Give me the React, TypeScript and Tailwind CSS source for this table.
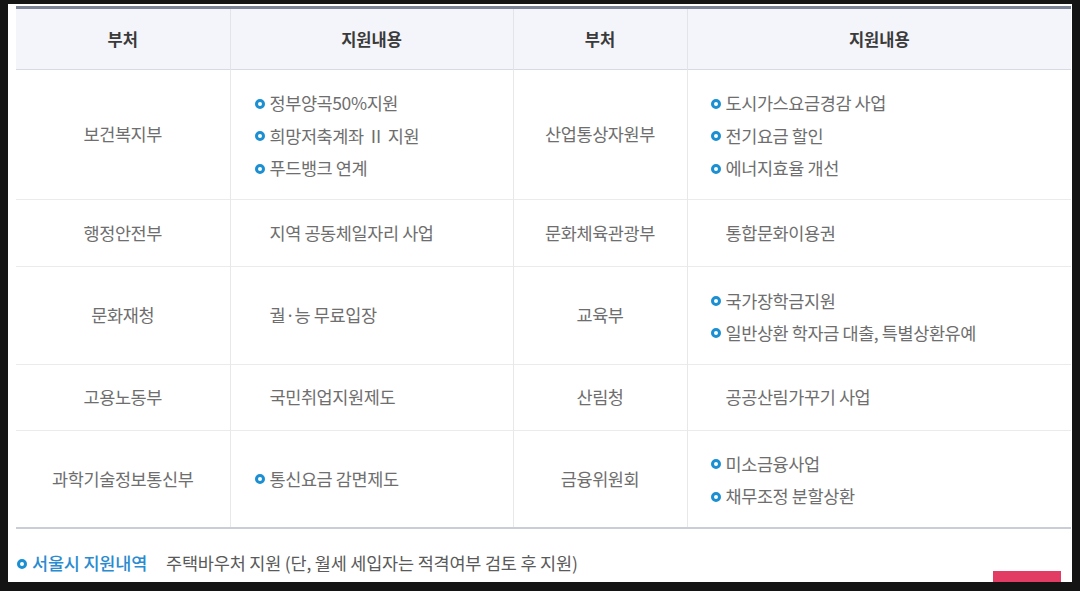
import React from "react";

type Row = {
  deptA: string;
  itemsA: string[];
  bulletA: boolean;
  deptB: string;
  itemsB: string[];
  bulletB: boolean;
  height: string;
};

const rows: Row[] = [
  {
    deptA: "보건복지부",
    itemsA: ["정부양곡50%지원", "희망저축계좌 Ⅱ 지원", "푸드뱅크 연계"],
    bulletA: true,
    deptB: "산업통상자원부",
    itemsB: ["도시가스요금경감 사업", "전기요금 할인", "에너지효율 개선"],
    bulletB: true,
    height: "h-[130px]",
  },
  {
    deptA: "행정안전부",
    itemsA: ["지역 공동체일자리 사업"],
    bulletA: false,
    deptB: "문화체육관광부",
    itemsB: ["통합문화이용권"],
    bulletB: false,
    height: "h-[67px]",
  },
  {
    deptA: "문화재청",
    itemsA: ["궐·능 무료입장"],
    bulletA: false,
    deptB: "교육부",
    itemsB: ["국가장학금지원", "일반상환 학자금 대출, 특별상환유예"],
    bulletB: true,
    height: "h-[98px]",
  },
  {
    deptA: "고용노동부",
    itemsA: ["국민취업지원제도"],
    bulletA: false,
    deptB: "산림청",
    itemsB: ["공공산림가꾸기 사업"],
    bulletB: false,
    height: "h-[66px]",
  },
  {
    deptA: "과학기술정보통신부",
    itemsA: ["통신요금 감면제도"],
    bulletA: true,
    deptB: "금융위원회",
    itemsB: ["미소금융사업", "채무조정 분할상환"],
    bulletB: true,
    height: "h-[97px]",
  },
];

function Bullet() {
  return (
    <span className="inline-block w-[10px] h-[10px] rounded-full border-[3px] border-[#1b8fd2] shrink-0" />
  );
}

function Items({ items, bullet }: { items: string[]; bullet: boolean }) {
  return (
    <ul className={`flex flex-col ${items.length > 1 ? "pt-[3px]" : ""}`}>
      {items.map((item) => (
        <li key={item} className="flex items-center gap-[5px] h-[32.5px]">
          {bullet ? <Bullet /> : <span className="w-[10px] shrink-0" />}
          <span>{item}</span>
        </li>
      ))}
    </ul>
  );
}

export default function App() {
  return (
    <div
      className="w-[1080px] h-[591px] bg-[#141414] pt-1 pl-2 overflow-hidden"
      style={{ fontFamily: '"Noto Sans CJK KR", "Noto Sans", sans-serif' }}
    >
      <div className="w-[1064px] h-[578px] bg-white overflow-hidden pt-[2px] flex flex-col">
        <table className="ml-2 w-[1055px] table-fixed border-collapse text-[17.5px] text-[#6e6e6e] tracking-[-0.4px]">
          <colgroup>
            <col className="w-[214px]" />
            <col className="w-[283px]" />
            <col className="w-[174px]" />
            <col className="w-[384px]" />
          </colgroup>
          <thead>
            <tr className="h-[62px] bg-[#f4f5fa] border-t-[3px] border-t-[#7a8396] border-b border-b-[#d7dae2]">
              {["부처", "지원내용", "부처", "지원내용"].map((h, i) => (
                <th
                  key={i}
                  className={`font-bold text-[16.5px] tracking-normal text-[#3a3a3a] text-center ${
                    i < 3 ? "border-r border-r-[#e2e4ea]" : ""
                  }`}
                >
                  {h}
                </th>
              ))}
            </tr>
          </thead>
          <tbody>
            {rows.map((r, idx) => (
              <tr
                key={r.deptA}
                className={`${r.height} ${
                  idx === rows.length - 1
                    ? "border-b-2 border-b-[#c8cdd8]"
                    : "border-b border-b-[#ebebeb]"
                }`}
              >
                <td className="text-center border-r border-r-[#e8e8e8]">{r.deptA}</td>
                <td className="pl-[24px] border-r border-r-[#e8e8e8]">
                  <Items items={r.itemsA} bullet={r.bulletA} />
                </td>
                <td className="text-center border-r border-r-[#e8e8e8]">{r.deptB}</td>
                <td className="pl-[23px]">
                  <Items items={r.itemsB} bullet={r.bulletB} />
                </td>
              </tr>
            ))}
          </tbody>
        </table>
        <div className="flex items-start">
          <div className="mt-[24px] ml-[9px] flex items-center h-[22px] text-[17.5px] tracking-[-0.2px]">
            <Bullet />
            <span className="ml-[5px] text-[#2a8bd0] font-medium">서울시 지원내역</span>
            <span className="ml-[19px] text-[#5a5a5a]">
              주택바우처 지원 (단, 월세 세입자는 적격여부 검토 후 지원)
            </span>
          </div>
          <div className="ml-auto mr-[11px] mt-[42px] w-[68px] h-[30px] bg-[#e23c64]" />
        </div>
      </div>
    </div>
  );
}
